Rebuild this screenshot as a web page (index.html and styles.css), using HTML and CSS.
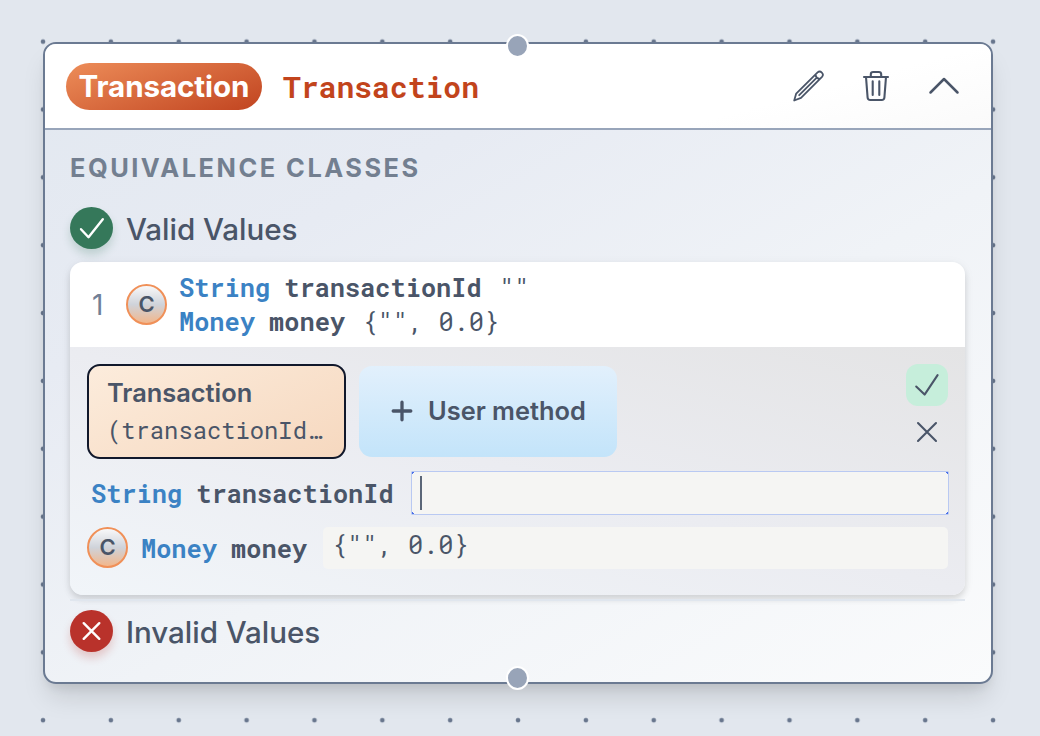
FILE: index.html
```html
<!DOCTYPE html>
<html lang="en">
<head>
<meta charset="utf-8">
<title>Transaction</title>
<link rel="stylesheet" href="styles.css">
</head>
<body>
<main class="canvas">
  <article class="node">
    <span class="handle handle-top"></span>
    <header class="node-head">
      <span class="pill">Transaction</span>
      <h1 class="name mono">Transaction</h1>
      <div class="actions">
        <svg class="icon icon-pencil" viewBox="0 0 34 34"><path d="M3.2 31.5 5.2 24.6 26.6 3.4C29.4 .8 33.6 5 31 7.8L10 28.8 3.2 31.5ZM24.4 5.6Q25 9.2 28.6 10M8.2 26.2 25 9.4"/></svg>
        <svg class="icon" viewBox="0 0 34 34"><path d="M5 8H29M7 8 8.6 28.5Q8.8 31 11.3 31H22.7Q25.2 31 25.4 28.5L27 8M11.8 8V5.4Q11.8 3 14.2 3H19.8Q22.2 3 22.2 5.4V8M13.7 12.2V26M20.3 12.2V26"/></svg>
        <svg class="icon icon-chevron" viewBox="0 0 34 34"><path d="M3.5 23.5 17 10 30.5 23.5"/></svg>
      </div>
    </header>
    <section class="node-body">
      <h2 class="caption">EQUIVALENCE CLASSES</h2>
      <div class="group">
        <span class="status status-ok"><svg viewBox="0 0 42 42"><path d="M10.5 22.2 18 30.2 32.3 12.2"/></svg></span>
        <span class="group-name">Valid Values</span>
      </div>
      <div class="cases">
        <div class="case">
          <span class="index">1</span>
          <span class="badge">C</span>
          <div class="params mono">
            <div><b class="type">String</b> <b>transactionId</b><span class="val">""</span></div>
            <div><b class="type">Money</b> <b>money</b><span class="val">{"", 0.0}</span></div>
          </div>
        </div>
        <div class="editor">
          <div class="methods">
            <div class="method selected"><strong>Transaction</strong><span class="mono signature">(transactionId…</span></div>
            <div class="method add"><svg viewBox="0 0 22 22"><path d="M11 2.2V19.8M2.2 11H19.8"/></svg><strong>User method</strong></div>
            <div class="confirm">
              <span class="ok"><svg viewBox="0 0 42 42"><path d="M10.2 22.5 18.6 30.6 31.6 11.2"/></svg></span>
              <svg class="cancel" viewBox="0 0 42 42"><path d="M12 12 30 30M30 12 12 30"/></svg>
            </div>
          </div>
          <div class="field field-first mono"><span class="label"><b class="type">String</b> <b>transactionId</b></span><div class="input focused"><i class="caret"></i></div></div>
          <div class="field mono"><span class="badge">C</span><span class="label"><b class="type">Money</b> <b>money</b></span><div class="input">{"", 0.0}</div></div>
        </div>
      </div>
      <div class="rule"></div>
      <div class="group group-invalid">
        <span class="status status-bad"><svg viewBox="0 0 42 42"><path d="M13.2 13.2 28.8 28.8M28.8 13.2 13.2 28.8"/></svg></span>
        <span class="group-name">Invalid Values</span>
      </div>
    </section>
    <span class="handle handle-bottom"></span>
  </article>
</main>
</body>
</html>
```
FILE: styles.css
```css
* { box-sizing: border-box; }
body { margin: 0; font-family: Inter, sans-serif; color: #4a5568; }
.canvas {
  height: 736px;
  padding: 42px 47px 0 43px;
  overflow: hidden;
  background: radial-gradient(circle at 33.93px 33.93px, #68768d 1.9px, transparent 2.7px) 9.1px 7.7px / 67.86px 67.86px, #e2e7ee;
}
.mono { font-family: "Roboto Mono", "DejaVu Sans Mono", monospace; font-size: 25.3px; }
svg { display: block; fill: none; stroke: currentColor; stroke-width: 2.1; stroke-linecap: round; stroke-linejoin: round; }
.node {
  position: relative;
  height: 642px;
  border: 2px solid #6b7a92;
  border-radius: 13px;
  background: linear-gradient(150deg, #e2e8f0 0%, #e7ebf3 28%, #f0f3f7 58%, #fafbfc 100%);
  box-shadow: 0 17px 26px -5px rgba(0, 0, 0, .13), 0 7px 10px -3px rgba(0, 0, 0, .07);
}
.handle {
  position: absolute;
  left: 461px;
  width: 23px;
  height: 24px;
  border: 2px solid #fff;
  border-radius: 50%;
  background: #98a4b8;
}
.handle-top { top: -10px; }
.handle-bottom { bottom: -8px; }
.node-head {
  display: flex;
  align-items: center;
  height: 86px;
  padding: 0 30px 0 21px;
  border-bottom: 2px solid #98a5ba;
  border-radius: 11px 11px 0 0;
  background: linear-gradient(165deg, #fff 75%, #fafafa);
}
.pill {
  width: 196px;
  height: 47px;
  border-radius: 24px;
  background: linear-gradient(160deg, #ed8d59, #c14420);
  color: #fff;
  font-size: 29.6px;
  font-weight: 650;
  line-height: 46px;
  letter-spacing: -.1px;
  text-align: center;
}
.name { margin: 1px 0 0 21px; color: #c2441c; font-size: 29.7px; line-height: 36px; }
.actions { display: flex; gap: 34px; margin: 0 0 0 auto; }
.icon { width: 34px; height: 34px; }
.icon-pencil { stroke-width: 1.8; }
.icon-chevron { stroke-width: 2.5; }
.node-body { padding: 20px 26px 0 25px; }
.caption { margin: 0; color: #737f90; font-size: 25.4px; font-weight: 650; line-height: 36px; letter-spacing: 2.5px; }
.group { display: flex; align-items: center; gap: 13px; height: 42px; margin-top: 21px; }
.status { width: 43px; height: 42px; border-radius: 50%; color: #fff; }
.status svg { width: 43px; height: 42px; stroke-width: 2.4; }
.status-ok { background: #35785a; box-shadow: 0 6px 9px rgba(53, 120, 90, .22); }
.status-bad { background: #b9322b; box-shadow: 0 6px 9px rgba(185, 50, 43, .22); }
.group-name { font-size: 29.6px; font-weight: 500; line-height: 42px; letter-spacing: -.05px; padding-top: 2px; }
.cases {
  height: 333px;
  margin-top: 13px;
  border-radius: 13px;
  overflow: hidden;
  box-shadow: 0 4px 6px rgba(0, 0, 0, .12), 0 2px 12px rgba(0, 0, 0, .05);
}
.case { display: flex; align-items: center; height: 85px; padding-left: 21px; background: #fff; }
.index { width: 35px; padding-left: 1px; color: #718096; font-size: 28px; }
.badge {
  flex: none;
  width: 41px;
  height: 41px;
  border: 2px solid #f09058;
  border-radius: 50%;
  background: linear-gradient(#f8f8f9, #cfd3da 50%, #f2b78c);
  font: 600 22px/37px Inter, sans-serif;
  text-align: center;
}
.params { margin-left: 12px; padding-bottom: 2px; line-height: 34px; white-space: nowrap; }
.params b, .label b { font-weight: 700; }
.params b + b, .label b + b { margin-left: -1px; }
.type { color: #3b82c4; }
.val { margin-left: 17.5px; }
.editor { height: 248px; padding: 17px 17px 0; background: linear-gradient(15deg, #f1f5f9, #ebecf1 50%, #e4e4e5); }
.methods { display: flex; gap: 13px; height: 95px; }
.method { width: 259px; border-radius: 13px; font-size: 25.4px; }
.method strong { font-weight: 600; }
.selected { display: flex; flex-direction: column; padding: 8px 0 0 18px; border: 2px solid #11182b; background: linear-gradient(155deg, #fcecdc, #f6d8bf); line-height: 37px; }
.signature { font-size: 23.8px; line-height: 38px; }
.add { display: flex; align-items: center; gap: 15px; width: 258px; height: 91px; margin-top: 2px; padding-left: 32px; background: linear-gradient(#e2f0fc, #c3e4fa); }
.add strong { margin-top: -2px; }
.add svg { width: 22px; height: 22px; margin-top: -1px; stroke-width: 3.3; }
.confirm { width: 42px; margin-left: auto; }
.ok { display: block; width: 42px; height: 42px; border-radius: 12px; background: #c6eedb; }
.cancel { width: 42px; height: 42px; margin-top: 5px; }
.field { display: flex; align-items: center; height: 44px; margin-top: 11px; white-space: nowrap; }
.field > .badge { margin: -2px 13px 0 0; }
.field-first { margin-top: 12px; padding-left: 4px; }
.label { width: 165px; margin-right: 17px; }
.field-first .label { width: 303px; }
.input { flex: 1; height: 42px; padding-left: 9px; border-radius: 5px; background: #f5f5f3; line-height: 35px; }
.focused {
  height: 44px;
  margin-right: -1px;
  padding: 4px 0 0 8px;
  border: 1px solid #b9c9f2;
  border-radius: 1px;
  background:
    linear-gradient(135deg, #4a70e8 1.5px, transparent 2px),
    linear-gradient(225deg, #4a70e8 1.5px, transparent 2px),
    linear-gradient(45deg, #4a70e8 1.5px, transparent 2px),
    linear-gradient(315deg, #4a70e8 1.5px, transparent 2px),
    #f5f5f3;
}
.caret { display: block; width: 2px; height: 34px; background: #5b6678; }
.rule { height: 2px; margin-top: 4px; background: #e0e6ee; }
.group-invalid { margin-top: 9px; }
```
